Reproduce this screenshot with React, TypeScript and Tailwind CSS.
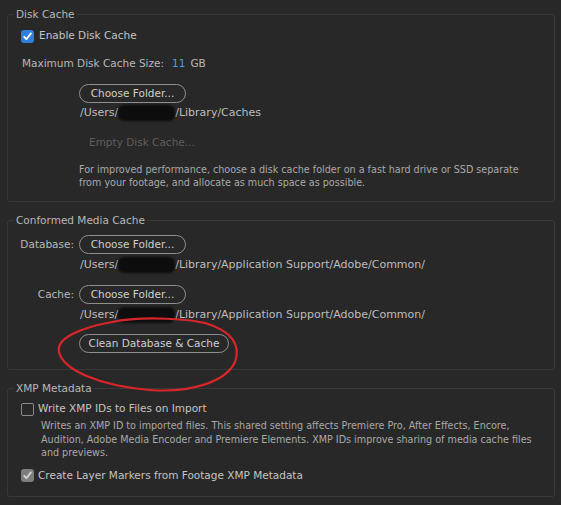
import React from "react";

const font = { fontFamily: '"DejaVu Sans", "Liberation Sans", sans-serif' };

function Check({ kind }: { kind: "blue" | "grey" | "empty" }) {
  if (kind === "empty") {
    return <span className="inline-block w-[13px] h-[13px] rounded-[2px] border border-[#8a8a8a] shrink-0" />;
  }
  const bg = kind === "blue" ? "bg-[#2d7fe0]" : "bg-[#7e7e7e]";
  const stroke = kind === "blue" ? "#ffffff" : "#d6d6d6";
  return (
    <span className={`inline-flex items-center justify-center w-[13px] h-[13px] rounded-[3px] shrink-0 ${bg}`}>
      <svg width="11" height="11" viewBox="0 0 11 11">
        <path d="M2.2 5.8 L4.4 8.2 L8.9 2.4" fill="none" stroke={stroke} strokeWidth="1.8" strokeLinecap="round" strokeLinejoin="round" />
      </svg>
    </span>
  );
}

function Pill({ children, w }: { children: React.ReactNode; w: string }) {
  return (
    <span className={`flex items-center justify-center h-[19px] rounded-full border border-[#8f8f8f] text-[#cfcfcf] text-[10.5px] leading-none ${w}`}>
      {children}
    </span>
  );
}

function Blob() {
  return <span className="inline-block align-middle w-[57px] h-[16px] -my-[4px] rounded-[6px] bg-[#0d0d0d] blur-[1px]" />;
}

function PathLine({ rest }: { rest: string }) {
  return (
    <div className="h-[20px] flex items-center text-[11px] text-[#bdbdbd] whitespace-nowrap">
      <span>/Users/</span>
      <Blob />
      <span>{rest}</span>
    </div>
  );
}

export default function App() {
  return (
    <div className="relative w-[561px] h-[505px] bg-[#282828] overflow-hidden" style={font}>
      <div className="flex flex-col pl-[7px] pr-[6px] pt-[7px]">
        {/* Disk Cache */}
        <fieldset className="border border-[#383838] rounded-[3px] pb-[12px]">
          <legend className="ml-[6px] px-[2px] h-[14px] leading-[14px] text-[10.5px] text-[#b8b8b8]">Disk Cache</legend>
          <div className="flex flex-col">
            <div className="h-[30px] flex items-center gap-[5px] pl-[13px] text-[10.5px] text-[#c4c4c4]">
              <Check kind="blue" />
              <span>Enable Disk Cache</span>
            </div>
            <div className="h-[25px] flex items-center pl-[14px] text-[10.5px] text-[#b8b8b8]">
              <span>Maximum Disk Cache Size:</span>
              <span className="ml-[8px] text-[#4a9ff0]">11</span>
              <span className="ml-[5px]">GB</span>
            </div>
            <div className="mt-[8px] pl-[71px] flex">
              <Pill w="w-[107px]">Choose Folder...</Pill>
            </div>
            <div className="pl-[72px]">
              <PathLine rest="/Library/Caches" />
            </div>
            <div className="mt-[10px] h-[20px] flex items-center pl-[81px] text-[10.5px] text-[#5e5e5e]">Empty Disk Cache...</div>
            <p className="mt-[10px] pl-[71px] text-[9.6px] leading-[13px] text-[#a9a9a9]">
              For improved performance, choose a disk cache folder on a fast hard drive or SSD separate
              <br />
              from your footage, and allocate as much space as possible.
            </p>
          </div>
        </fieldset>

        {/* Conformed Media Cache */}
        <fieldset className="mt-[11px] border border-[#383838] rounded-[3px] pb-[16px]">
          <legend className="ml-[6px] px-[2px] h-[14px] leading-[14px] text-[10.5px] text-[#b8b8b8]">Conformed Media Cache</legend>
          <div className="flex flex-col">
            <div className="mt-[8px] flex items-center">
              <span className="w-[66px] text-right text-[10.5px] text-[#b8b8b8]">Database:</span>
              <div className="ml-[5px] flex"><Pill w="w-[107px]">Choose Folder...</Pill></div>
            </div>
            <div className="mt-[1px] pl-[72px]">
              <PathLine rest="/Library/Application Support/Adobe/Common/" />
            </div>
            <div className="mt-[10px] flex items-center">
              <span className="w-[66px] text-right text-[10.5px] text-[#b8b8b8]">Cache:</span>
              <div className="ml-[5px] flex"><Pill w="w-[107px]">Choose Folder...</Pill></div>
            </div>
            <div className="mt-[1px] pl-[72px]">
              <PathLine rest="/Library/Application Support/Adobe/Common/" />
            </div>
            <div className="mt-[9px] pl-[71px] flex">
              <Pill w="w-[150px]">Clean Database &amp; Cache</Pill>
            </div>
          </div>
        </fieldset>

        {/* XMP Metadata */}
        <fieldset className="mt-[11px] border border-[#383838] rounded-[3px] pb-[10px]">
          <legend className="ml-[6px] px-[2px] h-[14px] leading-[14px] text-[10.5px] text-[#b8b8b8]">XMP Metadata</legend>
          <div className="flex flex-col">
            <div className="mt-[4px] h-[20px] flex items-center gap-[4px] pl-[13px] text-[10.5px] text-[#c4c4c4]">
              <Check kind="empty" />
              <span>Write XMP IDs to Files on Import</span>
            </div>
            <p className="pl-[33px] text-[9.6px] leading-[13.5px] text-[#a9a9a9]">
              Writes an XMP ID to imported files. This shared setting affects Premiere Pro, After Effects, Encore,
              <br />
              Audition, Adobe Media Encoder and Premiere Elements. XMP IDs improve sharing of media cache files
              <br />
              and previews.
            </p>
            <div className="mt-[6px] h-[20px] flex items-center gap-[4px] pl-[13px] text-[10.5px] text-[#c4c4c4]">
              <Check kind="grey" />
              <span>Create Layer Markers from Footage XMP Metadata</span>
            </div>
          </div>
        </fieldset>
      </div>

      {/* red hand-drawn annotation */}
      <svg className="absolute left-0 top-0 pointer-events-none" width="561" height="505" viewBox="0 0 561 505">
        <path
          d="M214 326 C196 318 140 316 112 322 C80 328 56 338 59 352 C63 370 100 386 150 390 C190 393 226 382 235 362 C241 345 232 331 205 323"
          fill="none"
          stroke="#d8262a"
          strokeWidth="2.2"
          strokeLinecap="round"
        />
      </svg>
    </div>
  );
}
